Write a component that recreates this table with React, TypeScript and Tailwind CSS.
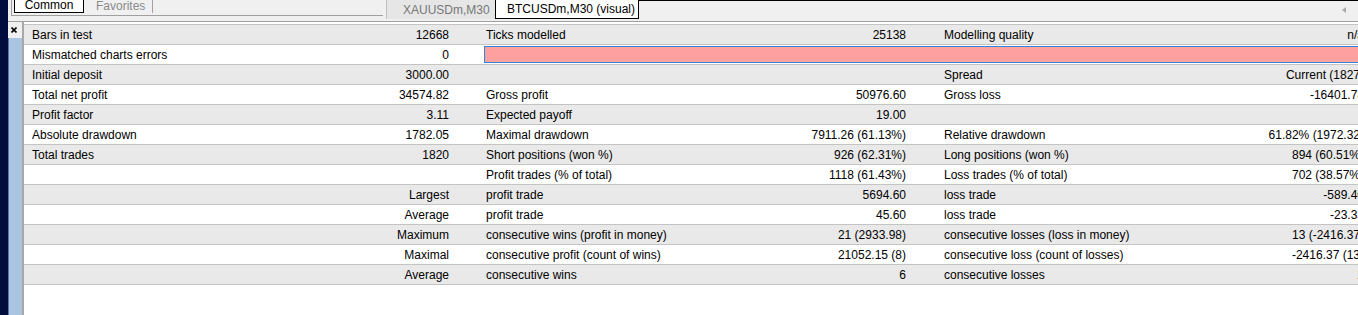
type Cell = { label?: string; value?: string };
type Row = { c1: Cell; c2?: Cell; c3?: Cell; bar?: boolean };

const rows: Row[] = [
  { c1: { label: 'Bars in test', value: '12668' }, c2: { label: 'Ticks modelled', value: '25138' }, c3: { label: 'Modelling quality', value: 'n/a' } },
  { c1: { label: 'Mismatched charts errors', value: '0' }, bar: true },
  { c1: { label: 'Initial deposit', value: '3000.00' }, c2: {}, c3: { label: 'Spread', value: 'Current (1827)' } },
  { c1: { label: 'Total net profit', value: '34574.82' }, c2: { label: 'Gross profit', value: '50976.60' }, c3: { label: 'Gross loss', value: '-16401.78' } },
  { c1: { label: 'Profit factor', value: '3.11' }, c2: { label: 'Expected payoff', value: '19.00' }, c3: {} },
  { c1: { label: 'Absolute drawdown', value: '1782.05' }, c2: { label: 'Maximal drawdown', value: '7911.26 (61.13%)' }, c3: { label: 'Relative drawdown', value: '61.82% (1972.32)' } },
  { c1: { label: 'Total trades', value: '1820' }, c2: { label: 'Short positions (won %)', value: '926 (62.31%)' }, c3: { label: 'Long positions (won %)', value: '894 (60.51%)' } },
  { c1: {}, c2: { label: 'Profit trades (% of total)', value: '1118 (61.43%)' }, c3: { label: 'Loss trades (% of total)', value: '702 (38.57%)' } },
  { c1: { value: 'Largest' }, c2: { label: 'profit trade', value: '5694.60' }, c3: { label: 'loss trade', value: '-589.40' } },
  { c1: { value: 'Average' }, c2: { label: 'profit trade', value: '45.60' }, c3: { label: 'loss trade', value: '-23.33' } },
  { c1: { value: 'Maximum' }, c2: { label: 'consecutive wins (profit in money)', value: '21 (2933.98)' }, c3: { label: 'consecutive losses (loss in money)', value: '13 (-2416.37)' } },
  { c1: { value: 'Maximal' }, c2: { label: 'consecutive profit (count of wins)', value: '21052.15 (8)' }, c3: { label: 'consecutive loss (count of losses)', value: '-2416.37 (13)' } },
  { c1: { value: 'Average' }, c2: { label: 'consecutive wins', value: '6' }, c3: { label: 'consecutive losses', value: '2' } },
];

function Group({ cell, width, pr }: { cell?: Cell; width: string; pr: string }) {
  return (
    <div className={`flex shrink-0 items-center ${width}`}>
      <span className="flex-1 whitespace-nowrap pl-2">{cell?.label}</span>
      <span className={`whitespace-nowrap text-right ${pr}`}>{cell?.value}</span>
    </div>
  );
}

export default function App() {
  return (
    <div className="flex h-[315px] w-[1358px] overflow-hidden bg-white font-['Liberation_Sans',Arial,sans-serif] text-[12px] leading-none text-black">
      {/* desktop edge */}
      <div className="w-2 shrink-0 bg-[#000d3d]" />

      <div className="flex min-w-0 flex-1 flex-col">
        {/* top tab strip */}
        <div className="flex h-[22px] shrink-0 border-b border-[#a0a0a0] bg-[#f0f0f0]">
          <div className="ml-[3px] flex h-[16px] w-[372px] shrink-0 items-start border-b border-l border-[#a0a0a0] pl-[2px]">
            <div className="-mt-px flex h-[14px] w-[70px] items-center justify-center border border-black bg-white pb-[2px]">Common</div>
            <div className="flex h-[13px] items-center border-r border-[#a0a0a0] pb-[2px] pl-3 pr-[7px] text-[#8a8a8a]">Favorites</div>
          </div>
          <div className="ml-[3px] flex h-[19px] w-[109px] shrink-0 items-center border-l border-[#c0c0c0] bg-[#e6e6e6] pl-4 text-[#777777]">
            XAUUSDm,M30
          </div>
          <div className="flex h-[19px] w-[144px] shrink-0 items-center border-x border-b border-black bg-white pl-[11px]">
            BTCUSDm,M30 (visual)
          </div>
          <div className="relative flex-1 border-t border-black">
            <svg className="absolute right-[12px] top-[6px]" width="4" height="6" viewBox="0 0 4 6">
              <path d="M4 0 L0 3 L4 6 Z" fill="#a8a8a8" />
            </svg>
          </div>
        </div>

        <div className="flex min-h-0 flex-1">
          {/* side strip */}
          <div className="flex w-4 shrink-0 border-r-2 border-[#a8a8a8]">
            <div className="flex w-full flex-col">
              <div className="flex h-[16px] items-center justify-center bg-[#f0f0f0] pr-[2px]">
                <svg width="6" height="6" viewBox="0 0 6 6">
                  <path d="M0.5 0.5 L5.5 5.5 M5.5 0.5 L0.5 5.5" stroke="#000" strokeWidth="1.6" />
                </svg>
              </div>
              <div className="flex-1 border-l border-[#5a78a8] bg-[#a9c5e2]" />
            </div>
          </div>

          {/* results table */}
          <div className="min-w-0 flex-1 overflow-hidden pt-[2px]">
            <div className="border-t border-[#c4c4c4]">
              {rows.map((r, i) => (
                <div
                  key={i}
                  className={`flex h-[20px] items-center border-b border-[#c4c4c4] ${i % 2 === 0 ? 'bg-[#e9e9e9]' : 'bg-white'}`}
                >
                  <Group cell={r.c1} width="w-[454px]" pr="pr-[29px]" />
                  {r.bar ? (
                    <div className="ml-[6px] h-[17px] flex-1 border-y border-l border-[#2f84dc] bg-[#ffa0a0]" />
                  ) : (
                    <>
                      <Group cell={r.c2} width="w-[458px]" pr="pr-[30px]" />
                      <Group cell={r.c3} width="w-[458px]" pr="pr-[30px]" />
                    </>
                  )}
                </div>
              ))}
            </div>
          </div>
        </div>
      </div>
    </div>
  );
}
